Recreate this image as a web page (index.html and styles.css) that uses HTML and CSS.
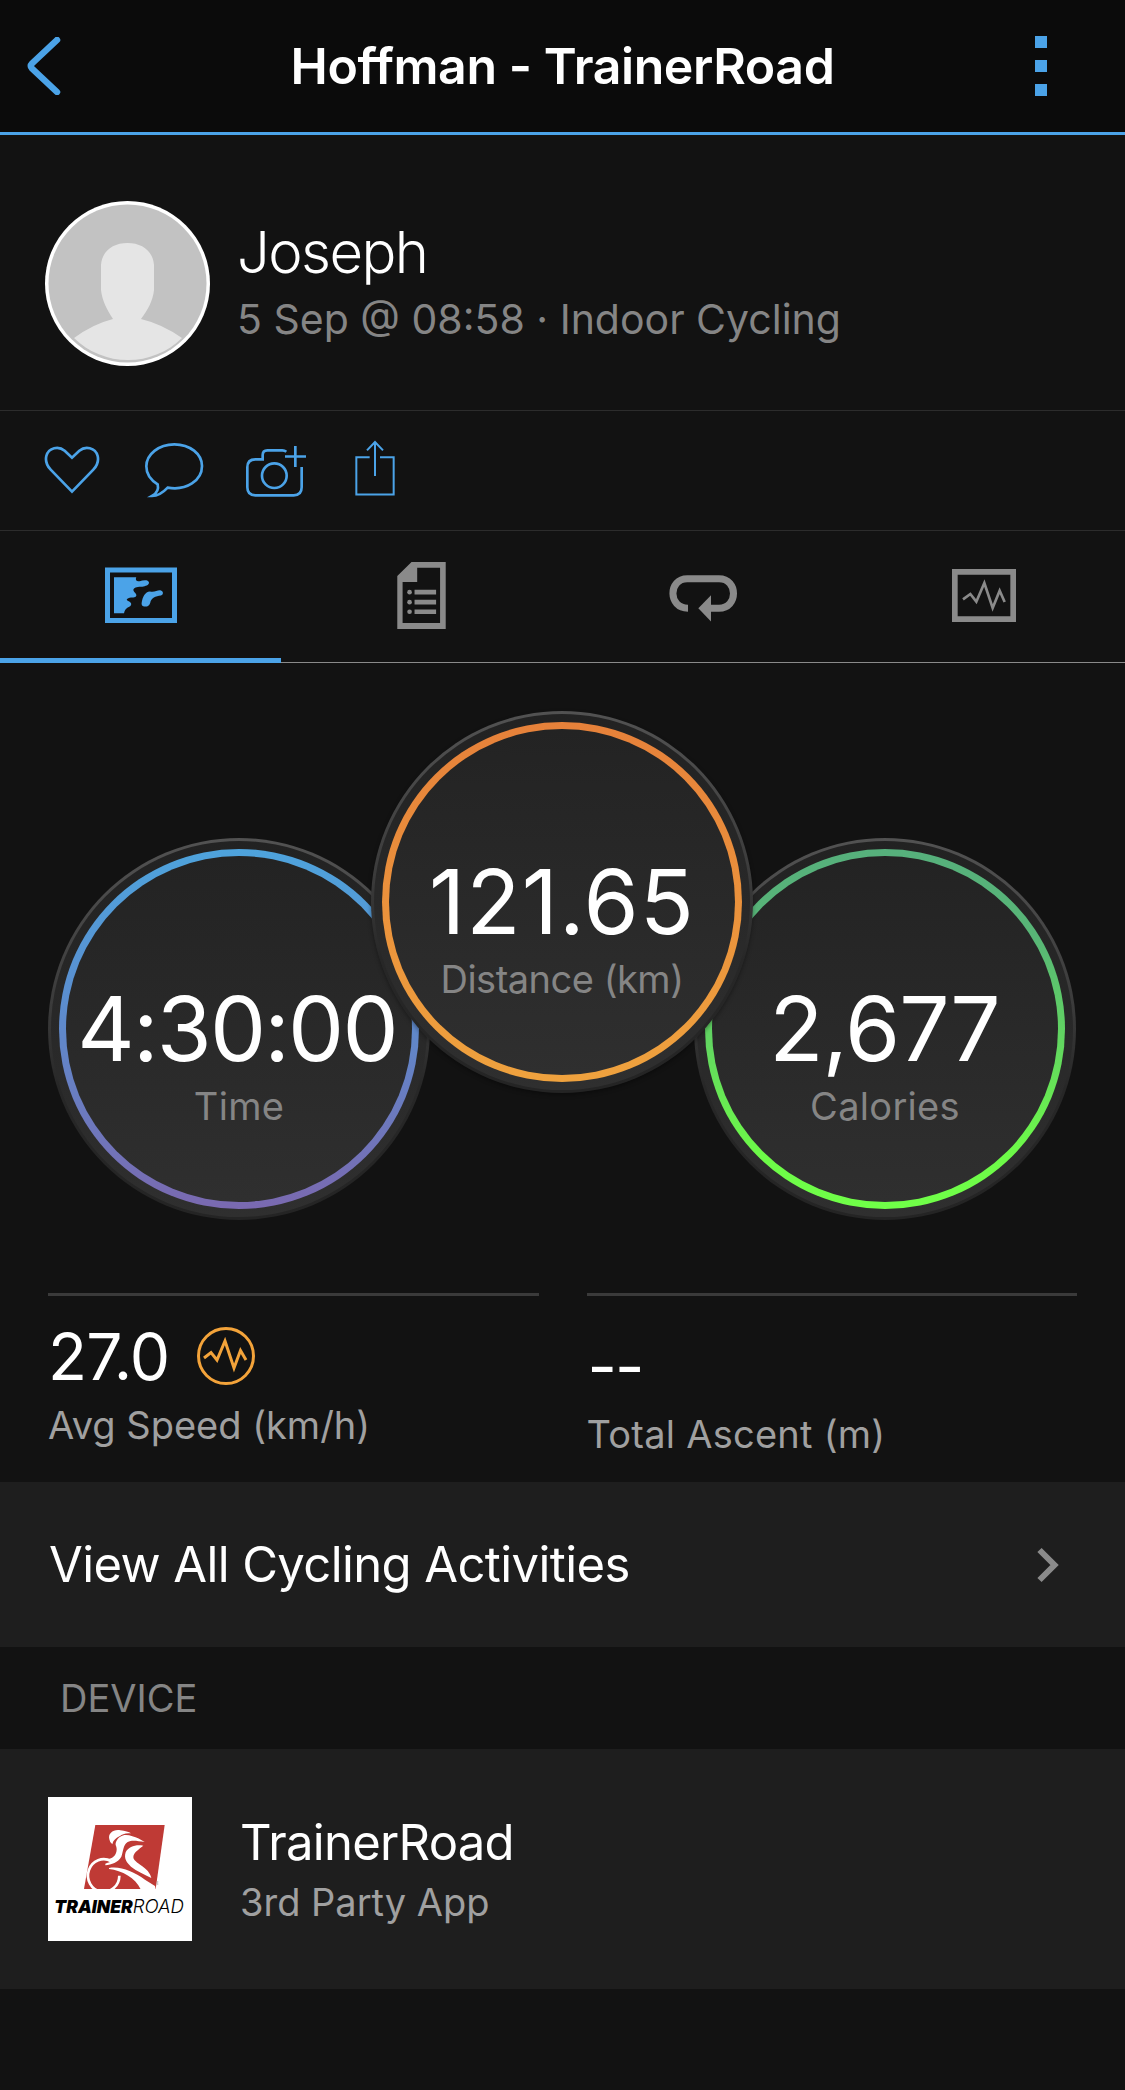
FILE: index.html
```html
<!DOCTYPE html>
<html lang="en">
<head>
    <meta charset="UTF-8">
    <meta name="viewport" content="width=device-width, initial-scale=1.0">
    <title>Hoffman - TrainerRoad</title>
    <link rel="stylesheet" href="styles.css">
</head>
<body>
    <header class="navbar">
        <svg class="back" viewBox="0 0 34 58" width="34" height="58"><path d="M30 3 5 26.500q-2.500 2.500 0 5L30 55"/></svg>
        <h1>Hoffman - TrainerRoad</h1>
        <div class="more"><i></i><i></i><i></i></div>
    </header>

    <section class="profile">
        <svg class="avatar" viewBox="0 0 165 165" width="165" height="165">
            <circle cx="82.500" cy="82.500" r="82.500" fill="#fff"/>
            <circle cx="82.500" cy="82.500" r="79" fill="#c2c2c2"/>
            <path fill="#e5e5e5" d="M29 137Q48 123 68 118C62 109 57 99 56 89V64C57 50 68 42 82.500 42S108 50 109 64V89C108 99 103 109 96 118Q117 123 137 137A77 77 0 0 1 29 137Z"/>
        </svg>
        <div>
            <h2>Joseph</h2>
            <p class="subtitle">5 Sep @ 08:58 · Indoor Cycling</p>
        </div>
    </section>

    <div class="actions">
        <svg viewBox="42 39 168 180" width="56" height="60"><path d="M126 200 62 134C48 119 46 106 49 93C56 67 86 62 104 77L126 98 148 77C166 62 196 67 203 93C206 106 204 119 190 134Z"/></svg>
        <svg viewBox="342 39 180 180" width="60" height="60"><path d="M413 188C470 198 516 166 516 123C516 87 480 58 433 58S349 88 349 124C349 147 363 166 383 178C387 194 380 205 366 213C384 213 398 204 413 188Z"/></svg>
        <svg class="camera" viewBox="645 39 186 180" width="62" height="60">
            <path d="M769 80Q764 76 757 76H712Q698 76 698 90V103H676Q652 103 652 127V187Q652 211 676 211H791Q815 211 815 187V126"/>
            <circle cx="733" cy="152" r="37"/>
            <path d="M796 63V126M765 94.500H828"/>
        </svg>
        <svg class="share" viewBox="975 39 120 180" width="40" height="60"><path d="M1019 96.500H979V208.500H1091V96.500H1050M1035 153V50M1011 76 1035 51 1059 76"/></svg>
    </div>

    <nav class="tabs">
        <div class="tab active">
            <svg viewBox="75 82 216 170" width="72" height="57">
                <path class="frame" d="M82.500 90.500H283.500V242H82.500Z"/>
                <path d="M102 112H169C165 120 170 125 179 124C190 121 205 119 207 128C207 137 196 138 187 141C174 141 164 141 160 150C161 159 170 160 169 168C166 176 156 171 145 175C138 178 139 181 146 184C155 188 156 195 149 200C138 204 134 211 132 220H102Z"/>
                <path d="M185 189C188 171 195 156 210 155C225 158 231 150 241 151C251 153 251 164 243 167C227 168 213 176 211 188C208 200 199 201 192 200C186 199 184 195 185 189Z"/>
            </svg>
        </div>
        <div class="tab">
            <svg viewBox="953 66 146 202" width="49" height="67">
                <path fill-rule="evenodd" d="M996 66H1099V268H953V108ZM1013 83V126H969V250H1082V83Z"/>
                <path d="M1005 150h65v14h-65zM1005 180h65v14h-65zM1005 209h65v14h-65z"/>
                <circle cx="990" cy="157" r="7"/><circle cx="990" cy="187" r="7"/><circle cx="990" cy="216" r="7"/>
            </svg>
        </div>
        <div class="tab">
            <svg class="loop" viewBox="87 110 204 140" width="68" height="47">
                <path class="line" d="M144 209C84 209 84 121 142 121H237C295 121 295 209 237 209H205"/>
                <path d="M213 170V249L175 209Z"/>
            </svg>
        </div>
        <div class="tab">
            <svg viewBox="937 87 192 159" width="64" height="53">
                <path class="frame" d="M945.500 95.500H1120.500V237.500H945.500Z"/>
                <path class="pulse" d="M970 178 992 162 1010 185 1034 129 1059 204 1080 152 1095 186"/>
            </svg>
        </div>
    </nav>

    <section class="dials">
        <div class="dial time">
            <div class="ring">
                <span class="number">4:30:00</span>
                <span class="caption">Time</span>
            </div>
        </div>
        <div class="dial distance">
            <div class="ring">
                <span class="number">121.65</span>
                <span class="caption">Distance (km)</span>
            </div>
        </div>
        <div class="dial calories">
            <div class="ring">
                <span class="number">2,677</span>
                <span class="caption">Calories</span>
            </div>
        </div>
    </section>

    <section class="stats">
        <div class="stat">
            <div class="value">
                <span class="speed">27.0</span>
                <svg viewBox="0 0 58 58" width="58" height="58"><circle cx="29" cy="29" r="27.500"/><path d="M7 31 14 25.500 20 33 28 14 37 41 43.500 23.500 49 33"/></svg>
            </div>
            <p>Avg Speed (km/h)</p>
        </div>
        <div class="stat empty">
            <div class="value"><span class="dashes">--</span></div>
            <p>Total Ascent (m)</p>
        </div>
    </section>

    <a class="link-row">
        <span>View All Cycling Activities</span>
        <svg viewBox="0 0 22 36" width="22" height="36"><path d="M2.500 3 17.500 18 2.500 33"/></svg>
    </a>

    <h3>DEVICE</h3>

    <section class="device">
        <svg class="logo" viewBox="24 21 432 432" width="144" height="144">
            <path fill="#bf3a35" d="M166 105H374L347 297H132Z"/>
            <g fill="#fff">
                <path d="M208 148C203 130 221 117 241 121C255 122 267 126 273 130C256 128 246 133 240 138C228 144 219 151 217 163Q209 157 208 148Z"/>
                <path d="M228 156C238 133 258 131 277 139C290 142 302 149 314 156C292 153 276 149 263 156C249 165 250 184 244 200C234 218 215 223 196 226V221C206 218 213 216 215 211L197 207C218 207 229 196 230 179C231 168 224 167 228 156Z"/>
                <path d="M310 167C288 163 266 169 257 187C251 206 260 218 273 230C290 244 314 253 334 264C330 248 319 237 306 228C291 217 280 211 280 201C281 186 297 178 310 167Z"/>
                <path d="M207 234C243 228 280 245 315 269L345 288 347 298H302C287 264 246 241 207 237Z"/>
            </g>
            <path class="wheel" d="M214 214A47 49 0 1 0 238 257"/>
            <path d="M355 275H351V283H355M351 279H355" fill="none" stroke="#999" stroke-width="1.500"/>
            <text class="heavy" x="43" y="368" textLength="235" lengthAdjust="spacingAndGlyphs">TRAINER</text>
            <text class="thin" x="278" y="368" textLength="154" lengthAdjust="spacingAndGlyphs">ROAD</text>
        </svg>
        <div>
            <h4>TrainerRoad</h4>
            <p>3rd Party App</p>
        </div>
    </section>
</body>
</html>
```
FILE: styles.css
```css
* {
    margin: 0;
    padding: 0;
    box-sizing: border-box;
}

body {
    font-family: Inter, "Liberation Sans", sans-serif;
    background: #121212;
    color: #fff;
    min-height: 2090px;
}

svg {
    display: block;
    flex: none;
}

/* Top bar */
.navbar {
    display: flex;
    align-items: center;
    justify-content: space-between;
    height: 135px;
    padding: 0 78px 0 27px;
    background: #0b0b0b;
    border-bottom: 3px solid #4ba3e8;
}

.back {
    fill: none;
    stroke: #4ba3e8;
    stroke-width: 6.5;
    stroke-linecap: round;
}

.navbar h1 {
    font-size: 50px;
    font-weight: 600;
    letter-spacing: -0.4px;
    margin-left: 29px;
    white-space: nowrap;
    font-variant-ligatures: none;
}

.more {
    display: flex;
    flex-direction: column;
    gap: 12px;
}

.more i {
    width: 12px;
    height: 12px;
    background: #4ba3e8;
}

/* Profile */
.profile {
    display: flex;
    align-items: center;
    gap: 27px;
    height: 276px;
    padding: 21px 45px 0;
    border-bottom: 1px solid #2c2c2c;
}

.profile h2 {
    font-size: 58px;
    font-weight: 300;
    line-height: 70px;
    letter-spacing: -1.6px;
}

.subtitle {
    font-size: 41px;
    line-height: 64px;
    color: #858585;
}

.profile > div {
    margin-top: 1px;
}

/* Like, comment, photo, share */
.actions {
    display: flex;
    align-items: center;
    gap: 44px;
    height: 120px;
    padding-left: 44px;
    padding-bottom: 6px;
    border-bottom: 1px solid #2c2c2c;
}

.actions svg {
    fill: none;
    stroke: #4ba3e8;
    stroke-width: 8;
}

.actions .camera {
    margin-left: -3px;
}

.actions .share {
    stroke-width: 6;
    margin-left: 4px;
}

/* Tabs */
.tabs {
    display: grid;
    grid-template-columns: repeat(4, 1fr);
    height: 132px;
}

.tab {
    display: flex;
    align-items: center;
    justify-content: center;
    padding-bottom: 3px;
    border-bottom: 1px solid #8a8a8a;
}

.tab.active {
    padding-top: 2px;
    padding-bottom: 0;
    border-bottom: 5px solid #4ba3e8;
}

.tab svg {
    fill: #8a8a8a;
}

.tab.active svg {
    fill: #4ba3e8;
}

.tab .frame,
.tab .line,
.tab .pulse {
    fill: none;
    stroke: #8a8a8a;
    stroke-width: 17;
}

.tab .line {
    stroke-width: 21;
}

.tab .pulse {
    stroke-width: 8;
}

.tab.active .frame {
    stroke: #4ba3e8;
    stroke-width: 15;
}

.tab .loop {
    margin-top: 7px;
}

/* Dials */
.dials {
    display: flex;
    justify-content: center;
    align-items: flex-start;
    height: 630px;
    padding-top: 48px;
    padding-right: 1px;
}

.dial {
    width: 382px;
    height: 382px;
    margin-top: 127px;
    padding: 8px;
    border: 3px solid transparent;
    border-radius: 50%;
    background:
        linear-gradient(#222, #2f2f2f) padding-box,
        linear-gradient(#525252, #3a3a3a 45%, #272727 65%, #242424) border-box;
}

.distance {
    position: relative;
    margin: 0 -59px;
    box-shadow: 0 2px 4px rgba(0, 0, 0, 0.35);
}

.ring {
    display: flex;
    flex-direction: column;
    align-items: center;
    width: 360px;
    height: 360px;
    padding-top: 123px;
    border: 7px solid transparent;
    border-radius: 50%;
    white-space: nowrap;
}

.time .ring {
    background:
        linear-gradient(#232323, #2f2f2f) padding-box,
        linear-gradient(#4ea3dc, #5a8fd0 40%, #7a69b0) border-box;
}

.distance .ring {
    background:
        linear-gradient(#232323, #2f2f2f) padding-box,
        linear-gradient(#e6813a, #efa23e) border-box;
}

.calories .ring {
    background:
        linear-gradient(#232323, #2f2f2f) padding-box,
        linear-gradient(#56b07c, #58b676 25%, #6dfa48 85%, #70ff48) border-box;
}

.number {
    font-size: 89px;
    line-height: 100px;
    letter-spacing: -1.8px;
}

.time .number {
    margin-left: -4px;
}

.distance .number {
    letter-spacing: 1.1px;
}

.calories .number {
    letter-spacing: -1px;
    margin-left: -1px;
}

.caption {
    font-size: 38px;
    line-height: 54px;
    letter-spacing: 0.3px;
    color: #858585;
}

.distance .caption {
    letter-spacing: -0.5px;
}

/* Stats */
.stats {
    display: grid;
    grid-template-columns: 1fr 1fr;
    gap: 48px;
    height: 189px;
    padding: 0 48px;
}

.stat {
    padding-top: 20px;
    border-top: 3px solid #3a3a3a;
}

.stat.empty {
    padding-top: 29px;
}

.value {
    display: flex;
    align-items: center;
    gap: 28px;
    height: 80px;
    font-size: 64px;
    letter-spacing: -0.8px;
}

.value svg {
    fill: none;
    stroke: #f3a33a;
    stroke-width: 3;
}

.dashes {
    margin-left: 1px;
    letter-spacing: -2px;
}

.stat p {
    font-size: 38px;
    line-height: 59px;
    color: #a0a0a0;
}

.stat.empty p {
    letter-spacing: 0.25px;
}

/* Rows */
.link-row {
    display: flex;
    align-items: center;
    justify-content: space-between;
    height: 165px;
    padding: 0 66px 0 49px;
    background: #1e1e1e;
    font-size: 49px;
    letter-spacing: -0.6px;
}

.link-row svg {
    fill: none;
    stroke: #8a8a8a;
    stroke-width: 6;
}

h3 {
    height: 102px;
    padding-left: 60px;
    font-size: 38px;
    font-weight: 400;
    line-height: 102px;
    color: #858585;
}

.device {
    display: flex;
    align-items: center;
    gap: 48px;
    height: 240px;
    padding: 0 48px;
    background: #1e1e1e;
}

.logo {
    background: #fff;
}

.logo .wheel {
    fill: none;
    stroke: #fff;
    stroke-width: 8;
}

.logo text {
    font-size: 54px;
    font-style: italic;
}

.logo .heavy {
    font-weight: 900;
}

.logo .thin {
    font-weight: 300;
}

.device h4 {
    font-size: 49px;
    font-weight: 400;
    line-height: 64px;
    letter-spacing: -0.7px;
    padding-top: 2px;
}

.device p {
    font-size: 38px;
    line-height: 54px;
    color: #a0a0a0;
}
```
